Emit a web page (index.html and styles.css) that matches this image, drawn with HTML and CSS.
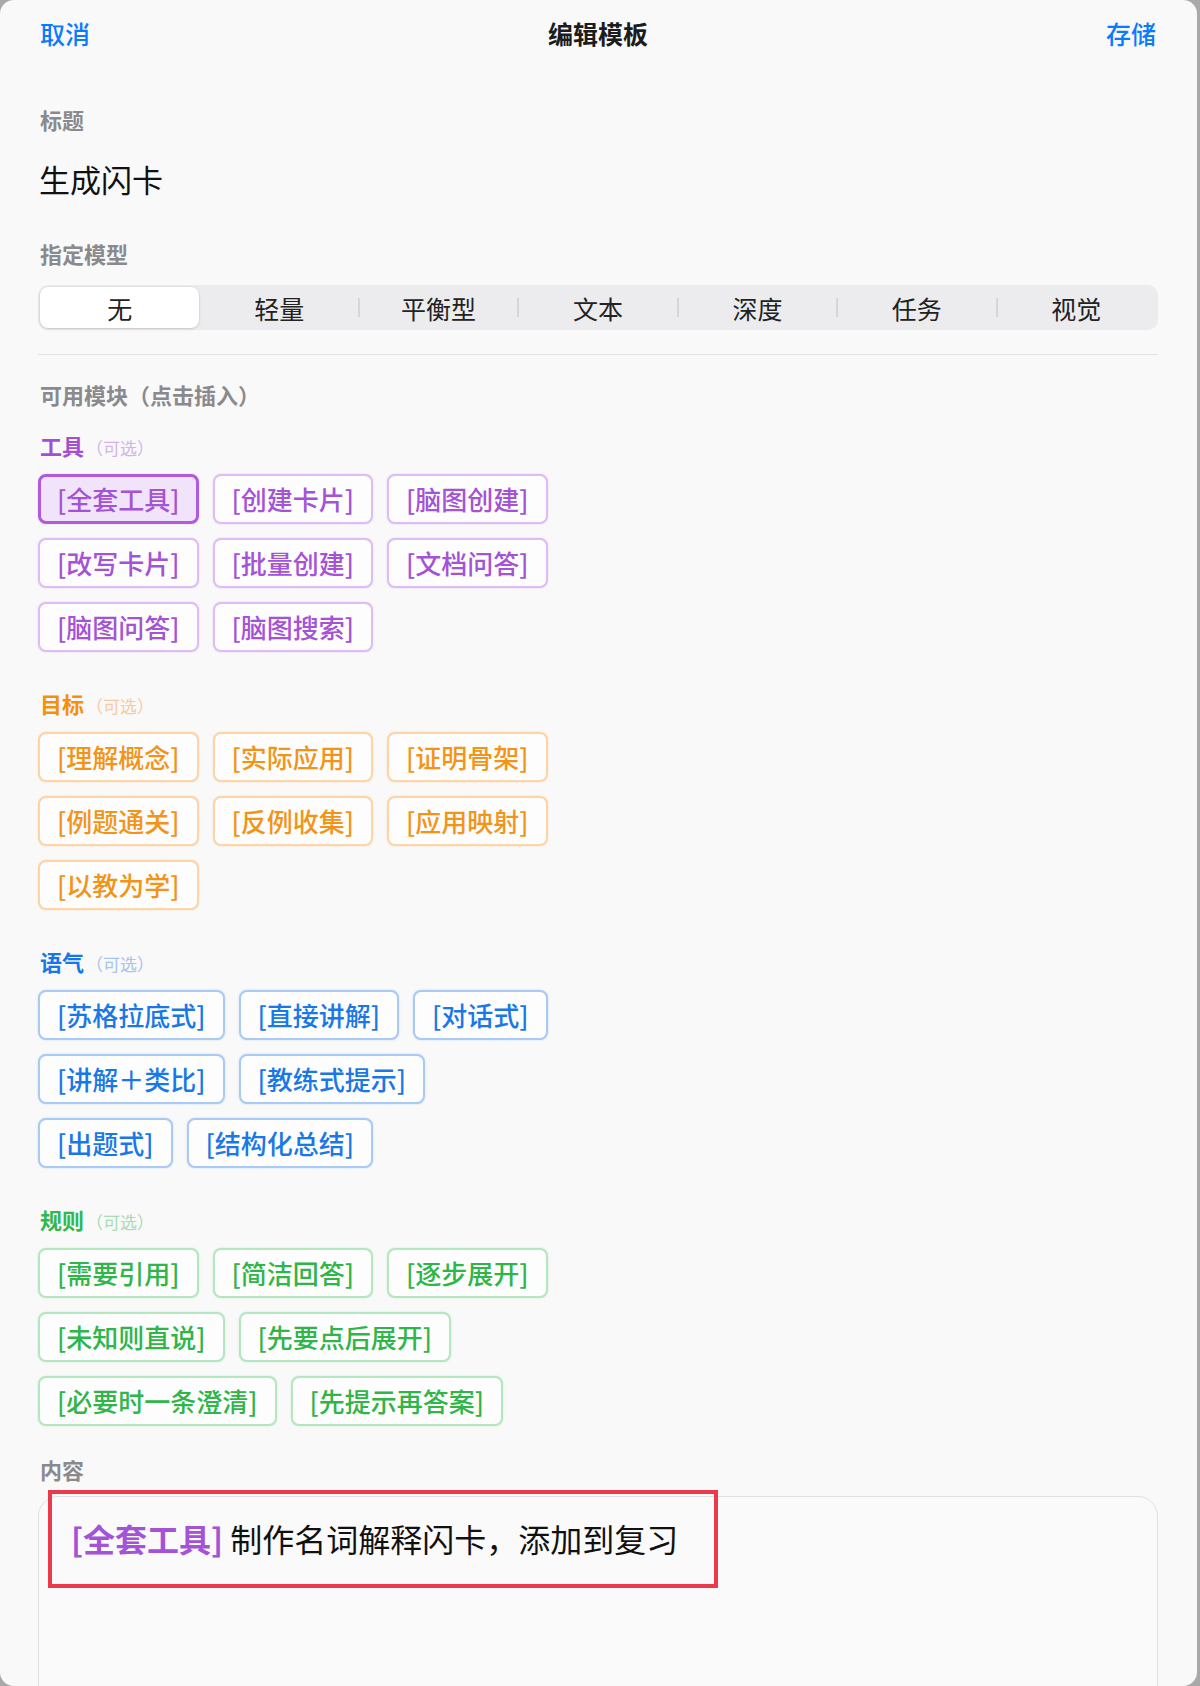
FILE: index.html
```html
<!DOCTYPE html>
<html lang="zh-CN">
<head>
<meta charset="utf-8">
<title>编辑模板</title>
<link rel="stylesheet" href="styles.css">
</head>
<body>
<div class="sheet">
  <header class="navbar">
    <span class="nav-btn">取消</span>
    <span class="nav-title">编辑模板</span>
    <span class="nav-btn">存储</span>
  </header>

  <div class="field-label label-title">标题</div>
  <div class="title-value">生成闪卡</div>

  <div class="field-label label-model">指定模型</div>
  <div class="segmented">
    <div class="seg selected">无</div>
    <div class="seg">轻量</div>
    <div class="seg">平衡型</div>
    <div class="seg">文本</div>
    <div class="seg">深度</div>
    <div class="seg">任务</div>
    <div class="seg">视觉</div>
  </div>

  <div class="rule"></div>

  <div class="field-label label-modules">可用模块（点击插入）</div>

  <section class="group purple first">
    <div class="group-title">工具<span class="opt">（可选）</span></div>
    <div class="chips">
      <span class="chip selected">[全套工具]</span>
      <span class="chip">[创建卡片]</span>
      <span class="chip">[脑图创建]</span>
      <span class="chip">[改写卡片]</span>
      <span class="chip">[批量创建]</span>
      <span class="chip">[文档问答]</span>
      <span class="chip">[脑图问答]</span>
      <span class="chip">[脑图搜索]</span>
    </div>
  </section>

  <section class="group orange">
    <div class="group-title">目标<span class="opt">（可选）</span></div>
    <div class="chips">
      <span class="chip">[理解概念]</span>
      <span class="chip">[实际应用]</span>
      <span class="chip">[证明骨架]</span>
      <span class="chip">[例题通关]</span>
      <span class="chip">[反例收集]</span>
      <span class="chip">[应用映射]</span>
      <span class="chip">[以教为学]</span>
    </div>
  </section>

  <section class="group blue">
    <div class="group-title">语气<span class="opt">（可选）</span></div>
    <div class="chips">
      <span class="chip">[苏格拉底式]</span>
      <span class="chip">[直接讲解]</span>
      <span class="chip">[对话式]</span>
      <span class="chip">[讲解＋类比]</span>
      <span class="chip">[教练式提示]</span>
      <span class="chip">[出题式]</span>
      <span class="chip">[结构化总结]</span>
    </div>
  </section>

  <section class="group green">
    <div class="group-title">规则<span class="opt">（可选）</span></div>
    <div class="chips">
      <span class="chip">[需要引用]</span>
      <span class="chip">[简洁回答]</span>
      <span class="chip">[逐步展开]</span>
      <span class="chip">[未知则直说]</span>
      <span class="chip">[先要点后展开]</span>
      <span class="chip">[必要时一条澄清]</span>
      <span class="chip">[先提示再答案]</span>
    </div>
  </section>

  <div class="field-label label-content">内容</div>
  <div class="editor">
    <p class="editor-text"><span class="token">[全套工具]</span> 制作名词解释闪卡，添加到复习</p>
    <div class="highlight"></div>
  </div>
</div>
</body>
</html>
```

FILE: styles.css
```css
* {
  box-sizing: border-box;
}

html,
body {
  margin: 0;
}

body {
  background: #a9a9a9;
  font-family: "Noto Sans CJK SC", "Noto Sans", sans-serif;
}

.sheet {
  width: 1197px;
  height: 1686px;
  background: #f9f9f9;
  border-radius: 14px;
  overflow: hidden;
  padding: 0 39px 0 38px;
}

/* top navigation bar */
.navbar {
  height: 66px;
  display: flex;
  align-items: center;
  justify-content: space-between;
  padding: 0 2px;
}

.nav-btn {
  color: #0a7aff;
  font-size: 25px;
  font-weight: 500;
}

.nav-title {
  color: #1c1c1e;
  font-size: 25px;
  font-weight: 700;
}

/* form labels */
.field-label {
  color: #8a8a8e;
  font-size: 22px;
  font-weight: 600;
  line-height: 30px;
  padding-left: 2px;
}

.label-title {
  margin-top: 38px;
}

.title-value {
  margin-top: 25px;
  padding-left: 1px;
  color: #111;
  font-size: 31px;
  line-height: 40px;
}

.label-model {
  margin-top: 39px;
}

/* model picker */
.segmented {
  margin-top: 17px;
  height: 45px;
  background: #ececee;
  border-radius: 10px;
  padding: 2px;
  display: grid;
  grid-template-columns: repeat(7, 1fr);
}

.seg {
  position: relative;
  display: flex;
  align-items: center;
  justify-content: center;
  color: #222;
  font-size: 25px;
  border-radius: 8px;
}

.seg:nth-child(n+3)::before {
  content: "";
  position: absolute;
  left: -1px;
  top: 11px;
  bottom: 11px;
  width: 2px;
  background: #d6d6d8;
}

.seg.selected {
  background: #fff;
  box-shadow: 0 1px 3px rgba(0, 0, 0, 0.14), 0 0 0 0.5px rgba(0, 0, 0, 0.06);
}

.rule {
  margin-top: 24px;
  height: 1px;
  background: #e2e2e4;
}

.label-modules {
  margin-top: 24px;
}

/* module groups */
.group {
  margin-top: 36px;
}

.group.first {
  margin-top: 21px;
}

.group-title {
  height: 30px;
  font-size: 22px;
  font-weight: 700;
  line-height: 30px;
  padding-left: 2px;
}

.opt {
  font-size: 17px;
  font-weight: 400;
  line-height: 1;
  margin-left: 2px;
}

.chips {
  margin-top: 14px;
  width: 520px;
  display: flex;
  flex-wrap: wrap;
  gap: 14px;
}

.chip {
  display: inline-block;
  height: 50px;
  line-height: 46px;
  padding: 0 17px;
  border: 2px solid;
  border-radius: 8px;
  background: #fdfdfd;
  font-size: 26px;
  font-weight: 500;
  white-space: nowrap;
}

.purple .group-title { color: #a24fd2; }
.purple .opt { color: #d5b2ea; }
.purple .chip {
  color: #a452d6;
  border-color: #dfbdf2;
  box-shadow: 0 0 2px rgba(175, 82, 222, 0.25);
}
.purple .chip.selected {
  background: #f1e4fa;
  border: 3px solid #b05ade;
  line-height: 44px;
  padding: 0 16px;
}

.orange .group-title { color: #f4900c; }
.orange .opt { color: #f7cb9c; }
.orange .chip {
  color: #f39418;
  border-color: #fbd5a8;
  box-shadow: 0 0 2px rgba(255, 149, 0, 0.25);
}

.blue .group-title { color: #1677e8; }
.blue .opt { color: #a6c3ea; }
.blue .chip {
  color: #1a78e6;
  border-color: #aacaf3;
  box-shadow: 0 0 2px rgba(0, 122, 255, 0.25);
}

.green .group-title { color: #33b84d; }
.green .opt { color: #a8dbb3; }
.green .chip {
  color: #2fb548;
  border-color: #b4e7c0;
  box-shadow: 0 0 2px rgba(52, 199, 89, 0.25);
}

/* content editor */
.label-content {
  margin-top: 28px;
}

.editor {
  position: relative;
  margin-top: 12px;
  height: 260px;
  border: 1.5px solid #e0e0e2;
  border-radius: 20px;
  background: #fafafa;
  padding: 19px 32px;
}

.editor-text {
  margin: 0;
  color: #111;
  font-size: 32px;
  font-weight: 400;
  line-height: 44px;
}

.token {
  color: #a452d6;
  font-weight: 700;
}

.highlight {
  position: absolute;
  left: 9px;
  top: -7px;
  width: 670px;
  height: 98px;
  border: 4px solid #ea3a4c;
}
```
